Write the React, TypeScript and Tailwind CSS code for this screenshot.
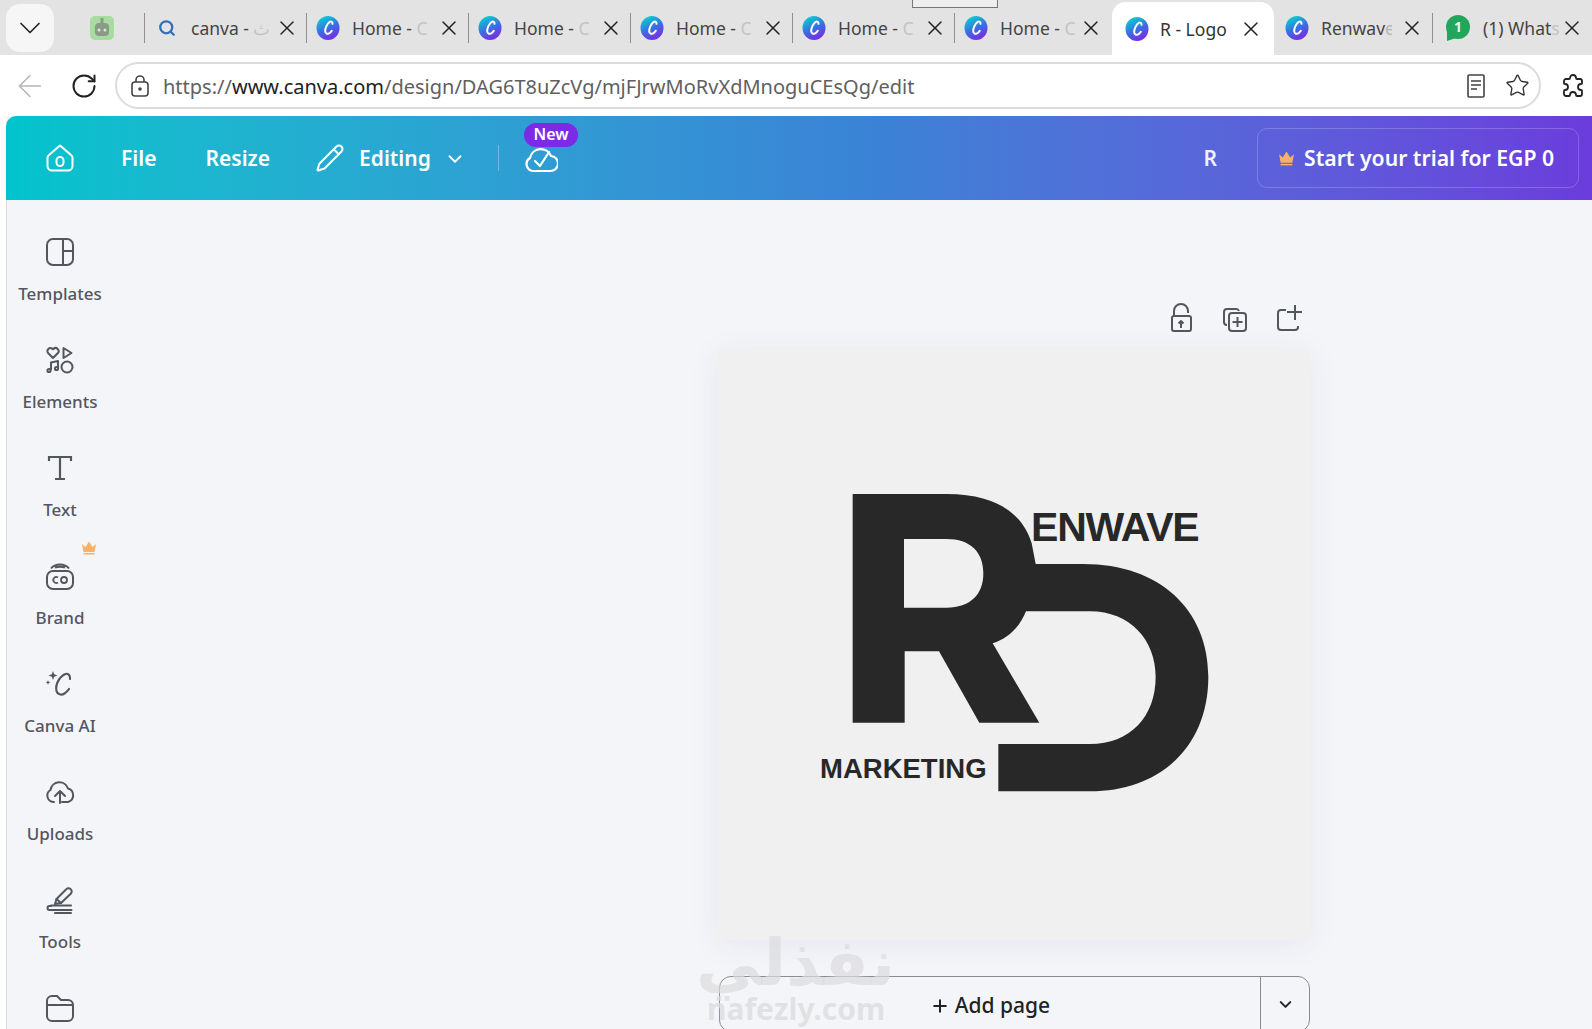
import React from "react";
import { ChevronDown, X, ArrowLeft, RotateCw, Star, Search, Pencil, Plus } from "lucide-react";

const CanvaFav = () => (
  <svg width="24" height="24" viewBox="0 0 24 24" className="shrink-0">
    <defs>
      <linearGradient id="cg" x1="0.15" y1="0" x2="0.6" y2="1">
        <stop offset="0.1" stopColor="#0cc8d2" />
        <stop offset="0.55" stopColor="#3a6fe2" />
        <stop offset="1" stopColor="#7a2be2" />
      </linearGradient>
    </defs>
    <ellipse cx="12" cy="12" rx="11.500" ry="12" fill="url(#cg)" />
    <path d="M16.500 7.800c.2-1.900-1.300-2.900-2.800-1.900-2.600 1.800-4.700 6.200-4.500 9.400.1 2.600 2.600 3.200 4.600 1.700.8-.6 1.500-1.400 2-2.200" fill="none" stroke="#fff" strokeWidth="2" strokeLinecap="round" />
  </svg>
);

const TabTitle = ({ children, w = "w-[96px]" }: { children: React.ReactNode; w?: string }) => (
  <span className={`ml-[12px] text-[17.5px] leading-[22px] text-[#444] whitespace-nowrap overflow-hidden ${w}`}>{children}</span>
);

const Close = () => <X size={24} strokeWidth={1.5} className="text-[#222] ml-auto mr-[1px] shrink-0" />;

const Tab = ({ icon, title, fade }: { icon: React.ReactNode; title: string; fade?: string }) => (
  <div className="flex items-center h-[30px] w-[162px] pl-[9px] pr-[6px] border-r border-[#8f8f8f]">
    {icon}
    <TabTitle>
      {title}
      {fade && <span className="text-[#c4c4c4]">{fade}</span>}
    </TabTitle>
    <Close />
  </div>
);

const IconTemplates = () => (
  <svg width="28" height="28" viewBox="0 0 28 28" fill="none" stroke="#54565e" strokeWidth="2">
    <rect x="1" y="1" width="26" height="26" rx="6" />
    <path d="M17 1v26M17 13h10" />
  </svg>
);
const IconElements = () => (
  <svg width="28" height="28" viewBox="0 0 28 28" fill="none" stroke="#54565e" strokeWidth="2" strokeLinejoin="round">
    <path d="M7 12 2.300 7.300a3 3 0 0 1 0-4.300 3 3 0 0 1 4.300 0l.4.4.4-.4a3 3 0 0 1 4.300 4.300z" />
    <path d="M17.500 2v10l8-5z" />
    <circle cx="21" cy="21" r="5.500" />
    <path d="M5 24V16.500l7-1.500v7.500" />
    <circle cx="3" cy="24.500" r="1.600" />
    <circle cx="10.500" cy="22.500" r="1.600" />
  </svg>
);
const IconText = () => (
  <svg width="28" height="28" viewBox="0 0 28 28" fill="none" stroke="#54565e" strokeWidth="2.200">
    <path d="M3 7V3h22v4M14 3v22M9 25h10" />
  </svg>
);
const IconBrand = () => (
  <svg width="28" height="28" viewBox="0 0 28 28" fill="none" stroke="#54565e" strokeWidth="2">
    <rect x="1" y="9" width="26" height="18" rx="6" />
    <path d="M5 6.500C9 1 19 1 23 6.500M9 5.500c3-1 7-1 10 0" />
    <path d="M12 15.500a3 3 0 1 0 0 5" strokeWidth="1.800" />
    <circle cx="18" cy="18" r="3" strokeWidth="1.800" />
  </svg>
);
const IconAI = () => (
  <svg width="30" height="30" viewBox="0 0 30 30" fill="none" stroke="#54565e" strokeWidth="2.200" strokeLinecap="round">
    <path d="M25 10c.5-3.500-2-6-4.500-5C15 7 10 15 11.500 22c.8 3.500 5 4.500 8 2.500 2-1.200 3.500-3 4.500-4.500" />
    <path d="M8 2l1.200 3.300 3.300 1.200-3.300 1.200L8 11 6.800 7.700 3.500 6.500l3.300-1.200z" fill="#54565e" stroke="none" />
    <path d="M3 11l.7 1.700 1.700.7-1.700.7L3 16l-.7-1.900-1.700-.7 1.700-.7z" fill="#54565e" stroke="none" />
  </svg>
);
const IconUploads = () => (
  <svg width="30" height="28" viewBox="0 0 30 28" fill="none" stroke="#54565e" strokeWidth="2" strokeLinecap="round" strokeLinejoin="round">
    <path d="M9 24H8A6.500 6.500 0 0 1 5.500 12 9 9 0 0 1 23 10.500a7 7 0 0 1 0 13.500h-6" />
    <path d="M15 25V14M10 18l5-5 5 5" />
  </svg>
);
const IconTools = () => (
  <svg width="28" height="28" viewBox="0 0 28 28" fill="none" stroke="#54565e" strokeWidth="2" strokeLinecap="round" strokeLinejoin="round">
    <path d="M9 18l1.500-5L20 3.500a3 3 0 0 1 5 4L15 17z" />
    <path d="M10.500 13l4.500 4" />
    <path d="M5 20H3.500a2 2 0 0 0 0 4h22" />
    <path d="M5 19.500h20M9 27h16" />
  </svg>
);
const IconFolder = () => (
  <svg width="28" height="28" viewBox="0 0 28 28" fill="none" stroke="#54565e" strokeWidth="2" strokeLinejoin="round">
    <path d="M1 8V7a5 5 0 0 1 5-5h5l4 4h7a5 5 0 0 1 5 5v11a5 5 0 0 1-5 5H6a5 5 0 0 1-5-5z" />
    <path d="M1 11h26" />
  </svg>
);
const Crown = ({ s = 16 }: { s?: number }) => (
  <svg width={s} height={s} viewBox="0 0 16 16" fill="#f7b267">
    <path d="M1 4l3.500 3L8 1.500 11.500 7 15 4l-1.500 8h-11z" />
    <path d="M2.500 13h11v1.500h-11z" />
  </svg>
);

const SideItem = ({ icon, label, crown }: { icon: React.ReactNode; label: string; crown?: boolean }) => (
  <div className="relative flex flex-col items-center h-[108px] shrink-0">
    <div className="h-[28px] flex items-center justify-center">{icon}</div>
    <span className="mt-[16px] text-[17px] leading-[24px] font-medium text-[#54565e]">{label}</span>
    {crown && (
      <span className="absolute -top-[22px] left-[74px]">
        <Crown />
      </span>
    )}
  </div>
);

const Logo = () => (
  <svg width="440" height="340" viewBox="0 0 1320 1020" className="block">
    <path
      fill="#282828"
      fillRule="evenodd"
      d="M188 72H470C640 72 705 150 725 220L737 282H880C1110 282 1255 420 1255 620C1255 830 1110 964 900 964H625V822H900C1020 822 1097 740 1097 620C1097 510 1020 424 900 424H708C690 470 655 505 608 520L748 758H568L447 544H344V758H188ZM342 207V413H470C540 413 580 375 580 310C580 245 540 207 470 207Z"
    />
  </svg>
);

export default function App() {
  return (
    <div className="w-[1592px] h-[1029px] overflow-hidden bg-white flex flex-col relative" style={{ fontFamily: '"Noto Sans", sans-serif' }}>
      {/* tab strip */}
      <div className="h-[55px] bg-[#e3e3e3] flex items-center shrink-0 relative">
        <div className="ml-[6px] w-[48px] h-[48px] rounded-[14px] bg-[#f6f6f6] flex items-center justify-center">
          <ChevronDown size={36} strokeWidth={1.1} className="text-[#222]" />
        </div>
        <div className="ml-[36px] mr-[30px] w-[24px] h-[24px] rounded-[5px] bg-[#a7dba0] flex items-center justify-center">
          <svg width="16" height="20" viewBox="0 0 16 20">
            <rect x="6.500" y="0" width="3" height="5" fill="#8a9a86" />
            <rect x="1" y="5" width="14" height="13" rx="4" fill="#8a9a86" />
            <circle cx="5" cy="12" r="1.500" fill="#d7ead4" />
            <circle cx="11" cy="12" r="1.500" fill="#d7ead4" />
          </svg>
        </div>
        <div className="w-px h-[30px] bg-[#8f8f8f]" />
        <Tab icon={<Search size={18} strokeWidth={3} className="text-[#2f6fb8] shrink-0 ml-[4px] mr-[3px]" />} title="canva - " fade="ث" />
        <Tab icon={<CanvaFav />} title="Home - " fade="C" />
        <Tab icon={<CanvaFav />} title="Home - " fade="C" />
        <Tab icon={<CanvaFav />} title="Home - " fade="C" />
        <Tab icon={<CanvaFav />} title="Home - " fade="C" />
        <div className="flex items-center h-[30px] w-[157px] pl-[9px] pr-[8px]">
          <CanvaFav />
          <TabTitle>
            Home - <span className="text-[#c4c4c4]">C</span>
          </TabTitle>
          <Close />
        </div>
        <div className="self-end h-[53px] w-[162px] bg-white rounded-t-[14px] flex items-center pl-[13px] pr-[10px]">
          <CanvaFav />
          <span className="ml-[11px] text-[17.5px] leading-[22px] text-[#333] whitespace-nowrap">R - Logo</span>
          <Close />
        </div>
        <div className="flex items-center h-[30px] w-[159px] pl-[11px] pr-[7px] border-r border-[#8f8f8f]">
          <CanvaFav />
          <TabTitle w="w-[71px]">
            Renwav<span className="text-[#b5b5b5]">e</span>
          </TabTitle>
          <Close />
        </div>
        <div className="flex items-center h-[30px] flex-1 pl-[12px] pr-[7px]">
          <svg width="26" height="26" viewBox="0 0 26 26" className="shrink-0">
            <circle cx="13" cy="12" r="12" fill="#21a65c" />
            <path d="M2 14v12l9-3z" fill="#21a65c" />
            <text x="13" y="17" textAnchor="middle" fontSize="14" fontWeight="700" fill="#e8f8ee">1</text>
          </svg>
          <TabTitle w="w-[76px]">
            (1) What<span className="text-[#c4c4c4]">s</span>
          </TabTitle>
          <Close />
        </div>
        <div className="absolute left-[912px] top-0 w-[86px] h-[8px] border-x border-b border-[#777] bg-[#eee]" />
      </div>

      {/* address row */}
      <div className="h-[61px] bg-white flex items-center shrink-0">
        <ArrowLeft size={36} strokeWidth={1} className="ml-[12px] text-[#b5b5b5]" />
        <RotateCw size={28} strokeWidth={1.7} className="ml-[22px] text-[#222]" />
        <div className="ml-[17px] w-[1426px] h-[47px] rounded-full border-2 border-[#dcdcdc] flex items-center pl-[14px] pr-[8px]">
          <svg width="18" height="22" viewBox="0 0 18 22" fill="none" stroke="#444" strokeWidth="1.600">
            <rect x="1" y="7" width="16" height="14" rx="3" />
            <path d="M5 7V5a4 4 0 0 1 8 0v2" />
            <circle cx="9" cy="14" r="1" fill="#444" />
          </svg>
          <span className="ml-[14px] text-[20px] leading-[28px] mt-[2px] text-[#5f5f5f] whitespace-nowrap">
            https://<span className="text-[#222]">www.canva.com</span>/design/DAG6T8uZcVg/mjFJrwMoRvXdMnoguCEsQg/edit
          </span>
          <svg className="ml-auto" width="18" height="24" viewBox="0 0 18 24" fill="none" stroke="#444" strokeWidth="1.600">
            <rect x="1" y="1" width="16" height="22" rx="1" />
            <path d="M4 7h10M4 11h10M4 15h6" />
          </svg>
          <Star size={25} strokeWidth={1.3} className="ml-[20px] mr-[1px] text-[#333]" />
        </div>
        <svg className="ml-[20px] shrink-0" width="24" height="26" viewBox="0 0 24 26" fill="none" stroke="#222" strokeWidth="1.800" strokeLinejoin="round">
          <path d="M9 5a3 3 0 0 1 6 0 1 1 0 0 0 1 1h3a2 2 0 0 1 2 2v2a1 1 0 0 1-1 1 3 3 0 0 0 0 6 1 1 0 0 1 1 1v3a2 2 0 0 1-2 2h-3a1 1 0 0 1-1-1 3 3 0 0 0-6 0 1 1 0 0 1-1 1H5a2 2 0 0 1-2-2v-3a1 1 0 0 1 1-1 3 3 0 0 0 0-6 1 1 0 0 1-1-1V8a2 2 0 0 1 2-2h3a1 1 0 0 0 1-1z" />
        </svg>
      </div>

      {/* canva app */}
      <div className="ml-[6px] flex-1 flex flex-col min-h-0 bg-[#f4f5f9]">
        <div className="h-[84px] shrink-0 rounded-tl-[10px] flex items-center relative bg-gradient-to-r from-[#00c4cc] via-[#3b82d6] via-55% to-[#6a3cdc] text-white">
          <svg className="ml-[39px]" width="30" height="30" viewBox="0 0 30 30" fill="none" stroke="#fff" strokeWidth="2" strokeLinejoin="round">
            <path d="M15 2.500 26 12a3 3 0 0 1 1.500 2.500V23a4.500 4.500 0 0 1-4.500 4.500H7A4.500 4.500 0 0 1 2.500 23v-8.500A3 3 0 0 1 4 12z" />
            <rect x="11.500" y="14" width="7" height="9" rx="3.500" />
          </svg>
          <span className="ml-[46px] mt-[2px] text-[21px] font-semibold">File</span>
          <span className="ml-[49px] mt-[2px] text-[21px] font-semibold">Resize</span>
          <Pencil size={30} strokeWidth={1.6} className="ml-[45px]" />
          <span className="ml-[14px] mt-[2px] text-[21px] font-semibold">Editing</span>
          <ChevronDown size={22} strokeWidth={2} className="ml-[13px] mt-[2px]" />
          <div className="ml-[32px] w-px h-[26px] bg-white/30" />
          <svg className="ml-[25px]" width="34" height="32" viewBox="0 0 34 32" fill="none" stroke="#fff" strokeWidth="2.200" strokeLinecap="round" strokeLinejoin="round">
            <path d="M10 29H9A7 7 0 0 1 6 16a11 11 0 0 1 21-2 7.500 7.500 0 0 1-1 15z" />
            <path d="M11 19l5 5 9-14" />
          </svg>
          <span className="absolute left-[518px] top-[7px] h-[24px] w-[54px] rounded-full bg-[#7d2ae8] text-[16px] leading-[23px] font-semibold text-center">New</span>
          <span className="ml-auto mt-[2px] text-[21px] font-semibold text-white/90">R</span>
          <div className="ml-[40px] mr-[13px] w-[322px] h-[60px] rounded-[10px] border border-white/20 flex items-center pl-[20px]">
            <Crown s={17} />
            <span className="ml-[9px] text-[21.2px] font-semibold whitespace-nowrap">Start your trial for EGP 0</span>
          </div>
        </div>

        <div className="flex-1 flex min-h-0 relative border-l border-[#dadbe0]">
          <aside className="w-[106px] shrink-0 flex flex-col pt-[38px]">
            <SideItem icon={<IconTemplates />} label="Templates" />
            <SideItem icon={<IconElements />} label="Elements" />
            <SideItem icon={<IconText />} label="Text" />
            <SideItem icon={<IconBrand />} label="Brand" crown />
            <SideItem icon={<IconAI />} label="Canva AI" />
            <SideItem icon={<IconUploads />} label="Uploads" />
            <SideItem icon={<IconTools />} label="Tools" />
            <SideItem icon={<IconFolder />} label="" />
          </aside>
          <main className="flex-1 flex flex-col pl-[605px]">
            <div className="w-[598px] flex justify-end gap-[26px] pt-[103px] pr-[13px] h-[150px] shrink-0 text-[#54565e]">
              <svg width="28" height="30" viewBox="0 0 28 30" fill="none" stroke="#54565e" strokeWidth="2" strokeLinejoin="round">
                <rect x="5" y="13" width="19" height="15" rx="2" />
                <path d="M7 13V8a7 7 0 0 1 14 0v2" />
                <path d="M14 25v-7M11.500 20.500l2.500-2.500 2.500 2.500" />
              </svg>
              <svg width="28" height="30" viewBox="0 0 28 30" fill="none" stroke="#54565e" strokeWidth="2" strokeLinejoin="round">
                <path d="M6 22a3 3 0 0 1-3-3V9a3 3 0 0 1 3-3h9a3 3 0 0 1 3 2" />
                <rect x="8" y="10" width="17" height="18" rx="3" />
                <path d="M16.500 14v10M11.500 19h10" />
              </svg>
              <svg width="28" height="30" viewBox="0 0 28 30" fill="none" stroke="#54565e" strokeWidth="2" strokeLinejoin="round">
                <path d="M11 7H6a3 3 0 0 0-3 3v14a3 3 0 0 0 3 3h14a3 3 0 0 0 3-3v-1" />
                <path d="M20 2v15M12 9h15" />
              </svg>
            </div>
            <div className="w-[592px] h-[590px] shrink-0 bg-[#f0f0f0] shadow-[0_4px_30px_rgba(60,60,80,0.07)] relative">
              <div className="absolute left-[72px] top-[120px]">
                <Logo />
              </div>
              <span className="absolute left-[313px] top-[157px] text-[41px] leading-none font-bold tracking-[-1.2px] text-[#282828]" style={{ fontFamily: '"Liberation Sans", sans-serif' }}>
                ENWAVE
              </span>
              <span className="absolute left-[102px] top-[405px] text-[27.5px] leading-none font-bold text-[#282828]" style={{ fontFamily: '"Liberation Sans", sans-serif' }}>
                MARKETING
              </span>
            </div>
            <div className="mt-[36px] w-[591px] h-[56px] shrink-0 ml-[1px] rounded-[12px] border border-[#8a8a90] flex">
              <div className="flex-1 flex items-start justify-center pt-[13px] text-[21px] font-medium text-[#222] gap-[5px]">
                <Plus size={20} strokeWidth={2.4} className="mt-[6px]" />
                <span>Add page</span>
              </div>
              <div className="w-[49px] border-l border-[#8a8a90] flex justify-center pt-[18px]">
                <ChevronDown size={19} strokeWidth={2.5} className="text-[#222]" />
              </div>
            </div>
          </main>
          {/* watermark */}
          <span dir="rtl" className="absolute left-[689px] top-[730px] text-[65px] leading-none font-bold text-[#dcdcde]/70 whitespace-nowrap" style={{ fontFamily: '"DejaVu Sans", sans-serif' }}>
            نفذلي
          </span>
          <span className="absolute left-[700px] top-[794px] text-[30px] leading-none font-bold text-[#dcdcde]/80 whitespace-nowrap">nafezly.com</span>
        </div>
      </div>
    </div>
  );
}
